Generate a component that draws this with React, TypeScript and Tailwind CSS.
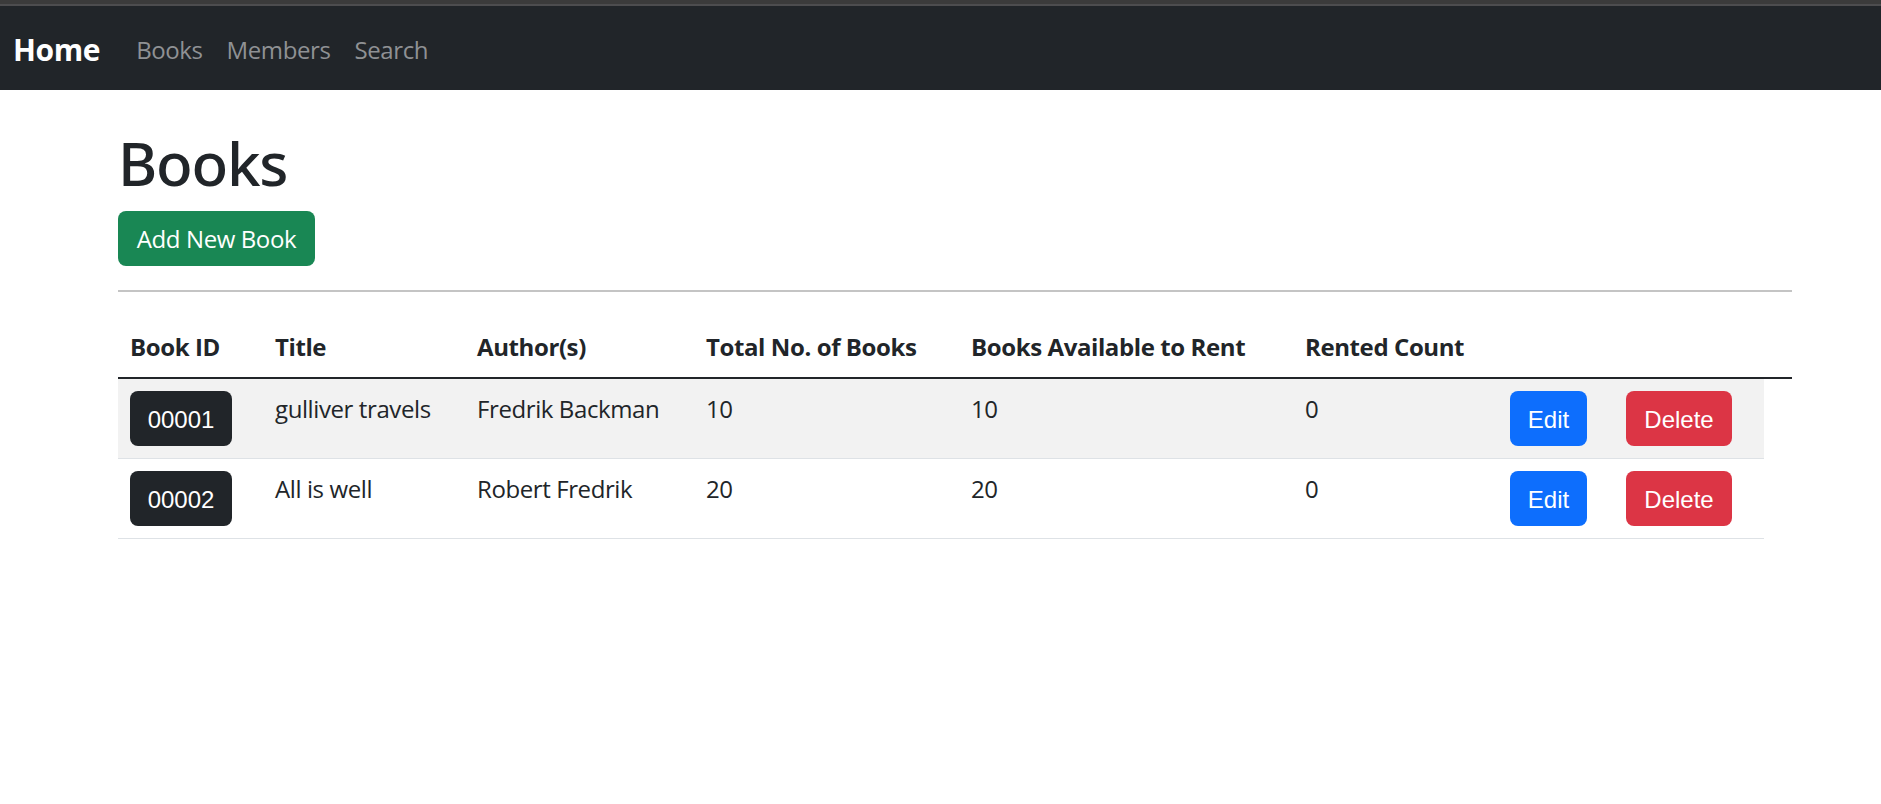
import React from 'react';

type Book = {
  id: string;
  title: string;
  author: string;
  total: number;
  available: number;
  rented: number;
};

const BOOKS: Book[] = [
  { id: '00001', title: 'gulliver travels', author: 'Fredrik Backman', total: 10, available: 10, rented: 0 },
  { id: '00002', title: 'All is well', author: 'Robert Fredrik', total: 20, available: 20, rented: 0 },
];

const btnFont = { fontFamily: '"Liberation Sans", Arial, sans-serif' };

export default function App() {
  return (
    <div
      className="min-h-screen bg-white text-[#212529] tracking-[-0.025em]"
      style={{ fontFamily: '"Open Sans", "Noto Sans", sans-serif' }}
    >
      {/* window chrome strip */}
      <div className="h-[4px] bg-[#3b3b3b]" />
      <div className="h-[2px] bg-[#4d4d4f]" />

      {/* Navbar */}
      <nav className="h-[84px] bg-[#212529] flex items-center pl-[13px] pt-[3px]">
        <span className="text-[30px] leading-[45px] font-bold text-white mr-[24px]">Home</span>
        <a className="px-[12px] text-[24px] leading-[36px] text-[#8f9194]">Books</a>
        <a className="px-[12px] text-[24px] leading-[36px] text-[#8f9194]">Members</a>
        <a className="px-[12px] text-[24px] leading-[36px] text-[#8f9194]">Search</a>
      </nav>

      <main className="pl-[118px]">
        <div className="w-[1674px]">
          <h1
            className="mt-[37px] text-[60px] leading-[72px] font-medium mb-[12px] tracking-[-0.02em]"
            style={{ fontFamily: '"Noto Sans", "Open Sans", sans-serif' }}
          >
            Books
          </h1>
          <button className="h-[55px] w-[197px] rounded-[8px] bg-[#198754] text-white text-[24px] leading-[36px]">
            Add New Book
          </button>
          <hr className="mt-[24px] border-0 h-[2px] bg-[#c4c4c4]" />

          <table className="mt-[25px] table-fixed border-collapse text-[24px] leading-[36px]">
            <thead>
              <tr className="text-left">
                <th className="w-[145px] p-[12px] font-bold border-b-2 border-[#212529]">Book ID</th>
                <th className="w-[202px] p-[12px] font-bold border-b-2 border-[#212529]">Title</th>
                <th className="w-[229px] p-[12px] font-bold border-b-2 border-[#212529]">Author(s)</th>
                <th className="w-[265px] p-[12px] font-bold border-b-2 border-[#212529]">Total No. of Books</th>
                <th className="w-[334px] p-[12px] font-bold border-b-2 border-[#212529]">Books Available to Rent</th>
                <th className="w-[205px] p-[12px] font-bold border-b-2 border-[#212529]">Rented Count</th>
                <th className="w-[116px] p-[12px] border-b-2 border-[#212529]" />
                <th className="w-[150px] p-[12px] border-b-2 border-[#212529]" />
                <th className="w-[28px] p-0 border-b-2 border-[#212529]" />
              </tr>
            </thead>
            <tbody>
              {BOOKS.map((b, i) => {
                const cell = `p-[12px] align-top border-b border-[#dee2e6] ${i % 2 === 0 ? 'bg-[#f2f2f2]' : 'bg-white'}`;
                return (
                  <tr key={b.id}>
                    <td className={cell}>
                      <span
                        className="flex items-center justify-center h-[55px] w-[102px] rounded-[8px] bg-[#212529] text-white text-[24px] pt-[3px] tracking-normal"
                        style={btnFont}
                      >
                        {b.id}
                      </span>
                    </td>
                    <td className={cell}>{b.title}</td>
                    <td className={cell}>{b.author}</td>
                    <td className={cell}>{b.total}</td>
                    <td className={cell}>{b.available}</td>
                    <td className={cell}>{b.rented}</td>
                    <td className={cell}>
                      <button
                        className="flex items-center justify-center h-[55px] w-[77px] rounded-[8px] bg-[#0d6efd] text-white text-[24px] pt-[3px] tracking-normal"
                        style={btnFont}
                      >
                        Edit
                      </button>
                    </td>
                    <td className={cell}>
                      <button
                        className="flex items-center justify-center h-[55px] w-[106px] rounded-[8px] bg-[#dc3545] text-white text-[24px] pt-[3px] tracking-normal"
                        style={btnFont}
                      >
                        Delete
                      </button>
                    </td>
                    <td className="p-0" />
                  </tr>
                );
              })}
            </tbody>
          </table>
        </div>
      </main>
    </div>
  );
}
